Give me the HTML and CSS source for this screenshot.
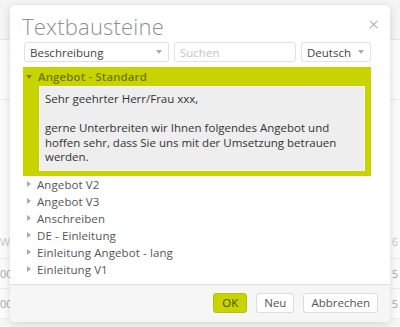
FILE: index.html
```html
<!DOCTYPE html>
<html lang="de">
<head>
  <meta charset="UTF-8">
  <meta name="viewport" content="width=device-width, initial-scale=1.0">
  <title>Textbausteine</title>
  <link rel="stylesheet" href="styles.css">
</head>
<body>
  <!-- page behind the dialog -->
  <div class="page">
    <div class="page-top"></div>
    <div class="page-row tall"></div>
    <div class="page-row spacer"></div>
    <div class="page-row head"><span>W</span><span>6</span></div>
    <div class="page-row"><span>00</span><span>5</span></div>
    <div class="page-row"><span>00</span><span>5</span></div>
  </div>
  <div class="overlay"></div>

  <div class="dialog">
    <div class="dialog-header">
      <h2>Textbausteine</h2>
      <span class="close-btn">&times;</span>
    </div>

    <div class="filters">
      <div class="select wide">Beschreibung <span class="caret"></span></div>
      <div class="search">Suchen</div>
      <div class="select lang">Deutsch <span class="caret"></span></div>
    </div>

    <div class="tree">
      <div class="item open">
        <div class="item-title"><span class="arrow down"></span>Angebot - Standard</div>
        <div class="item-body">
          Sehr geehrter Herr/Frau xxx,<br><br>
          gerne Unterbreiten wir Ihnen folgendes Angebot und hoffen sehr, dass Sie uns mit der Umsetzung betrauen werden.
        </div>
      </div>
      <div class="item"><div class="item-title"><span class="arrow"></span>Angebot V2</div></div>
      <div class="item"><div class="item-title"><span class="arrow"></span>Angebot V3</div></div>
      <div class="item"><div class="item-title"><span class="arrow"></span>Anschreiben</div></div>
      <div class="item"><div class="item-title"><span class="arrow"></span>DE - Einleitung</div></div>
      <div class="item"><div class="item-title"><span class="arrow"></span>Einleitung Angebot - lang</div></div>
      <div class="item"><div class="item-title"><span class="arrow"></span>Einleitung V1</div></div>
    </div>

    <div class="dialog-footer">
      <button class="btn ok">OK</button>
      <button class="btn">Neu</button>
      <button class="btn">Abbrechen</button>
    </div>
  </div>
</body>
</html>
```

FILE: styles.css
```css
* {
  margin: 0;
  padding: 0;
  box-sizing: border-box;
  font-family: 'Open Sans', 'Noto Sans', sans-serif;
}

body {
  width: 400px;
  height: 327px;
  background: #f3f3f3;
  position: relative;
  overflow: hidden;
}

/* Page behind */
.page {
  display: flex;
  flex-direction: column;
}

.page-top {
  height: 40px;
  background: #f0f0f0;
  border-bottom: 1px solid #dcdcdc;
}

.page-row {
  display: flex;
  justify-content: space-between;
  align-items: center;
  height: 30px;
  padding: 0 2px 0 0;
  background: #fafafa;
  border-bottom: 1px solid #e4e4e4;
  color: #777;
  font-size: 11px;
}

.page-row.tall {
  height: 60px;
}

.page-row.spacer {
  height: 125px;
  border-bottom: none;
}

.page-row.head {
  height: 34px;
  color: #aaa;
}

.overlay {
  position: absolute;
  top: 0;
  left: 0;
  width: 100%;
  height: 100%;
  background: rgba(255, 255, 255, 0.35);
}

/* Dialog */
.dialog {
  position: absolute;
  top: 5px;
  left: 10px;
  width: 380px;
  height: 317px;
  background: #fff;
  border-radius: 5px;
  box-shadow: 0 2px 10px rgba(0, 0, 0, 0.15);
  display: flex;
  flex-direction: column;
  overflow: hidden;
}

.dialog-header {
  display: flex;
  justify-content: space-between;
  align-items: center;
  padding: 4px 11px 0 12px;
  height: 37px;
}

.dialog-header h2 {
  font-size: 22px;
  font-weight: 300;
  color: #8f8f8f;
  letter-spacing: 0.2px;
}

.close-btn {
  color: #999;
  font-size: 19px;
  font-weight: 300;
  line-height: 1;
  margin-top: -3px;
}

.filters {
  display: flex;
  gap: 5px;
  padding: 0 19px 0 14px;
  height: 20px;
}

.select,
.search {
  display: flex;
  align-items: center;
  justify-content: space-between;
  height: 20px;
  padding: 0 6px 0 5px;
  border: 1px solid #e2e2e2;
  border-radius: 3px;
  font-size: 11.5px;
  color: #444;
  background: #fff;
}

.select.wide {
  width: 145px;
}

.search {
  flex: 1;
  color: #c4c4c4;
}

.select.lang {
  width: 70px;
}

.caret {
  width: 0;
  height: 0;
  border-left: 3px solid transparent;
  border-right: 3px solid transparent;
  border-top: 4px solid #aaa;
}

/* Tree */
.tree {
  flex: 1;
  padding: 5px 19px 0 13px;
}

.item-title {
  display: flex;
  align-items: center;
  height: 17px;
  font-size: 11.5px;
  font-weight: 500;
  color: #555;
  letter-spacing: 0.1px;
}

.arrow {
  width: 0;
  height: 0;
  margin: 0 6px 0 4px;
  border-top: 3px solid transparent;
  border-bottom: 3px solid transparent;
  border-left: 4px solid #aaa;
}

.arrow.down {
  border-left: 3px solid transparent;
  border-right: 3px solid transparent;
  border-top: 4px solid #7a8400;
  border-bottom: none;
  margin: 0 6px 0 3px;
}

.item.open {
  background: #c8d400;
  padding: 1px 6px 5px 0;
}

.item.open .item-title {
  color: #6f7800;
  font-weight: 600;
}

.item-body {
  margin: 1px 0 0 16px;
  padding: 5px 6px 5px 5px;
  background: #eeeeee;
  border: 1px solid #f4f4f4;
  font-size: 11.5px;
  line-height: 14.5px;
  color: #333;
}

/* Footer */
.dialog-footer {
  display: flex;
  justify-content: flex-end;
  align-items: center;
  gap: 9px;
  height: 38px;
  padding: 0 12px 2px 0;
  background: #f6f6f6;
  border-top: 1px solid #dedede;
}

.btn {
  height: 20px;
  padding: 0 7px;
  border: 1px solid #dcdcdc;
  border-radius: 3px;
  background: #fff;
  font-size: 11.5px;
  color: #555;
}

.btn.ok {
  padding: 0 8px;
  background: #c8d400;
  border-color: #b8c300;
  color: #4a5000;
}
```
